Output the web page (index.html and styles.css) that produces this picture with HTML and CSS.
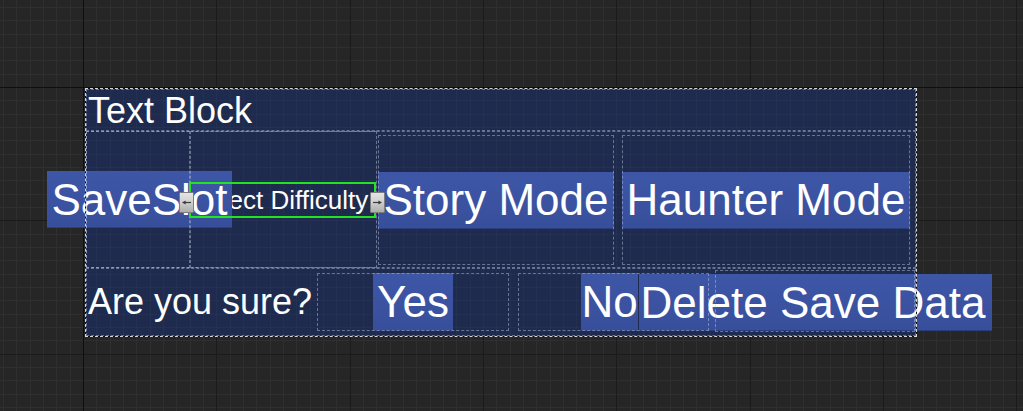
FILE: index.html
```html
<!DOCTYPE html>
<html lang="en">
<head>
<meta charset="utf-8">
<title>Widget Designer</title>
<link rel="stylesheet" href="styles.css">
</head>
<body>
<div class="stage">
  <div class="panel">
    <div class="row row-title outlined">Text Block</div>

    <div class="row row-modes outlined">
      <div class="cell cell-slot outlined">
        <div class="btn btn-saveslot">SaveSlot</div>
      </div>
      <div class="cell cell-difficulty outlined">
        <div class="difficulty">Select Difficulty</div>
      </div>
      <div class="slot slot-story">
        <div class="box outlined"><div class="btn btn-fill">Story Mode</div></div>
      </div>
      <div class="slot slot-haunter">
        <div class="box outlined"><div class="btn btn-fill">Haunter Mode</div></div>
      </div>
      <div class="selection">
        <span class="handle handle-left">
          <svg width="9" height="5" viewBox="0 0 9 5"><path d="M3 2.5H9" stroke="#3c3c3c" stroke-width="1.2"/><path d="M0 2.5L3.6 0.4V4.6Z" fill="#3c3c3c"/></svg>
        </span>
        <span class="handle handle-right">
          <svg width="9" height="5" viewBox="0 0 9 5"><path d="M0 2.5H6" stroke="#3c3c3c" stroke-width="1.2"/><path d="M9 2.5L5.4 0.4V4.6Z" fill="#3c3c3c"/></svg>
        </span>
      </div>
    </div>

    <div class="row row-confirm outlined">
      <div class="cell cell-question">Are you sure?</div>
      <div class="slot slot-yes">
        <div class="box outlined"><div class="btn btn-yes">Yes</div></div>
      </div>
      <div class="slot slot-no">
        <div class="box outlined"><div class="btn btn-no">No</div></div>
      </div>
      <div class="slot slot-delete">
        <div class="box outlined"><div class="btn btn-delete">Delete Save Data</div></div>
      </div>
    </div>
  </div>
</div>
</body>
</html>
```

FILE: styles.css
```css
html, body {
  margin: 0;
  padding: 0;
}

body {
  width: 1023px;
  height: 411px;
  overflow: hidden;
  font-family: "Liberation Sans", Arial, sans-serif;
  color: #ffffff;
  background-color: #262626;
  background-image:
    linear-gradient(to right, transparent 83px, #0f0f0f 83px, #0f0f0f 84px, transparent 84px),
    linear-gradient(to bottom, transparent 87px, #0f0f0f 87px, #0f0f0f 88px, transparent 88px),
    repeating-linear-gradient(to right, transparent 0 83px, #1b1b1b 83px 84px, transparent 84px 133.333px),
    repeating-linear-gradient(to bottom, transparent 0 87px, #1b1b1b 87px 88px, transparent 88px 133.333px),
    repeating-linear-gradient(to right, transparent 0 3px, #2f2f2f 3px 4px, transparent 4px 13.333px),
    repeating-linear-gradient(to bottom, transparent 0 7px, #2f2f2f 7px 8px, transparent 8px 13.333px);
}

.stage {
  padding: 88px 0 0 85px;
}

/* Root canvas panel */
.panel {
  position: relative;
  width: 832px;
  height: 249px;
  padding: 1px;
  box-sizing: border-box;
  background-color: #1e2b4e;
  background-attachment: fixed;
  background-image:
    repeating-linear-gradient(to right, transparent 0 3px, rgba(255,255,255,0.025) 3px 4px, transparent 4px 13.333px),
    repeating-linear-gradient(to bottom, transparent 0 7px, rgba(255,255,255,0.025) 7px 8px, transparent 8px 13.333px);
}

.panel::before,
.panel::after {
  content: "";
  position: absolute;
  inset: 0;
  pointer-events: none;
  z-index: 3;
}

.panel::before {
  border: 1px solid #0c0c0c;
}

.panel::after {
  border: 1px dashed #d4d8e0;
}

/* Dashed designer outlines drawn above content */
.outlined {
  position: relative;
}

.outlined::after {
  content: "";
  position: absolute;
  inset: 0;
  border: 1px dashed rgba(196, 205, 224, 0.45);
  pointer-events: none;
  z-index: 2;
}

.row {
  display: flex;
  box-sizing: border-box;
}

.row-title {
  height: 42px;
  padding: 2px 0 0 2px;
  font-size: 36px;
  line-height: 40px;
}

.row-modes {
  height: 137px;
}

.row-confirm {
  height: 68px;
  align-items: stretch;
}

.cell {
  display: flex;
  align-items: center;
  box-sizing: border-box;
  flex-shrink: 0;
  min-width: 0;
}

.slot {
  display: flex;
  box-sizing: border-box;
  flex-shrink: 0;
  min-width: 0;
}

.box {
  flex: 1;
  min-width: 0;
  display: flex;
  align-items: center;
  justify-content: center;
}

/* Row 2 cells */
.cell-slot {
  width: 104px;
  padding-left: 3px;
  justify-content: center;
}

.cell-difficulty {
  width: 187px;
}

.difficulty {
  width: 100%;
  padding-left: 1px;
  box-sizing: border-box;
  white-space: nowrap;
  font-size: 26px;
  line-height: 26px;
}

.slot-story {
  width: 241px;
  padding: 4px 4px 3px 1px;
}

.slot-haunter {
  width: 298px;
  padding: 4px 6px 3px 4px;
}

/* Row 3 cells */
.cell-question {
  width: 226px;
  padding-left: 2px;
  font-size: 36px;
  line-height: 36px;
  white-space: nowrap;
}

.slot-yes {
  width: 201px;
  padding: 5px 4px 5px 5px;
}

.slot-no {
  width: 200px;
  padding: 5px 4px 5px 5px;
}

.slot-delete {
  width: 203px;
  padding: 2px 1px 4px 2px;
}

/* Buttons */
.btn {
  position: relative;
  z-index: 1;
  flex-shrink: 0;
  box-sizing: border-box;
  height: 57px;
  display: flex;
  align-items: center;
  justify-content: center;
  white-space: nowrap;
  font-size: 44px;
  line-height: 44px;
  color: #ffffff;
  background: linear-gradient(to bottom, #3d56a6 0%, #3a52a0 60%, #374e9a 100%);
  box-shadow: inset 0 -1px 0 #2b3e80;
}

.btn-saveslot {
  width: 185px;
}

.btn-fill {
  width: 100%;
}

.btn-yes {
  width: 80px;
  height: 58px;
}

.btn-no {
  width: 57px;
  height: 58px;
  margin-right: 8px;
}

.btn-delete {
  width: 353px;
  margin-top: 3px;
  justify-content: flex-start;
  padding-left: 2px;
}

/* Selected widget overlay */
.selection {
  position: absolute;
  left: 103px;
  top: 51px;
  width: 187px;
  height: 36px;
  box-sizing: border-box;
  border: 2px solid #22e322;
  z-index: 4;
  pointer-events: none;
}

.handle {
  position: absolute;
  top: 8px;
  width: 15px;
  height: 21px;
  box-sizing: border-box;
  border: 1px solid #7d7d7d;
  border-radius: 1px;
  background: linear-gradient(to bottom, #e4e4e4 0%, #cfcfcf 50%, #adadad 100%);
  display: flex;
  align-items: center;
  justify-content: center;
}

.handle-left {
  left: -12px;
}

.handle-right {
  right: -11px;
}

.handle svg {
  display: block;
}
```
